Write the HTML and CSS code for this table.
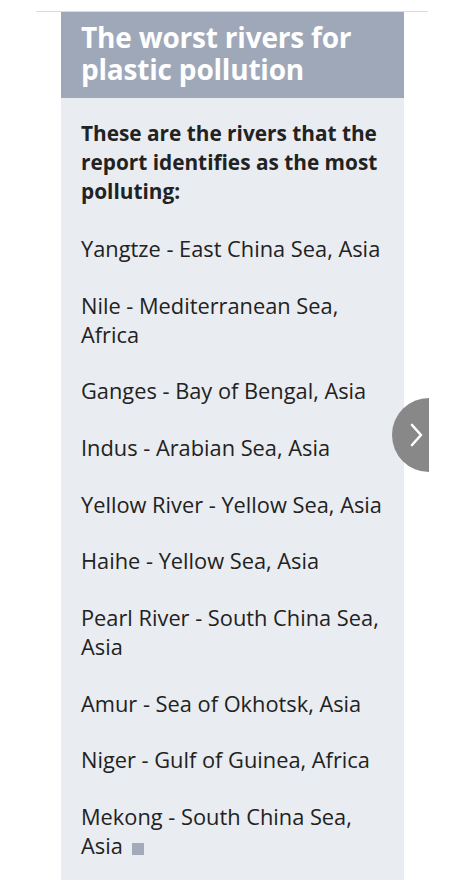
FILE: index.html
```html
<!DOCTYPE html>
<html>
<head>
<meta charset="utf-8">
<link rel="stylesheet" href="styles.css">
</head>
<body>
<div class="page">
  <div class="rule"></div>
  <div class="box">
    <h2 class="head">The worst rivers for plastic pollution</h2>
    <div class="body">
      <p class="intro">These are the rivers that the report identifies as the most polluting:</p>
      <p class="item">Yangtze - East China Sea, Asia</p>
      <p class="item">Nile - Mediterranean Sea, Africa</p>
      <p class="item">Ganges - Bay of Bengal, Asia</p>
      <p class="item">Indus - Arabian Sea, Asia</p>
      <p class="item">Yellow River - Yellow Sea, Asia</p>
      <p class="item">Haihe - Yellow Sea, Asia</p>
      <p class="item">Pearl River - South China Sea, Asia</p>
      <p class="item">Amur - Sea of Okhotsk, Asia</p>
      <p class="item">Niger - Gulf of Guinea, Africa</p>
      <p class="item">Mekong - South China Sea, Asia <span class="end"></span></p>
    </div>
  </div>
  <div class="next">
    <svg width="14" height="24" viewBox="0 0 14 24"><path d="M2 2 L11 12 L2 22" fill="none" stroke="#fff" stroke-width="2.6" stroke-linecap="round" stroke-linejoin="round"/></svg>
  </div>
</div>
</body>
</html>
```
FILE: styles.css
```css
html, body {
  margin: 0;
  padding: 0;
  background: #fff;
}
body {
  font-family: "Open Sans", "Noto Sans", sans-serif;
  color: #222;
}
.page {
  position: relative;
  width: 463px;
  height: 894px;
  overflow: hidden;
}
.rule {
  margin: 11px 0 0 36px;
  width: 392px;
  height: 1px;
  background: #dcdcdc;
}
.box {
  margin-left: 61px;
  width: 343px;
  background: #e9ecf0;
  padding-bottom: 20px;
}
.head {
  margin: 0;
  background: #9ea8b9;
  color: #fff;
  font-size: 28px;
  line-height: 32px;
  font-weight: 700;
  padding: 9px 20px 13px 20px;
  letter-spacing: -0.2px;
}
.body {
  padding: 21px 16px 0 20px;
}
.body p {
  margin: 0 0 27.67px 0;
  font-size: 21.8px;
  line-height: 29px;
}
.body p.intro {
  font-size: 20.8px;
  margin-bottom: 28px;
}
.body p:last-child {
  margin-bottom: 0;
}
.intro {
  font-weight: 700;
}
.end {
  display: inline-block;
  width: 12px;
  height: 12px;
  background: #a3abbb;
  margin-left: 4px;
  vertical-align: -1px;
}
.next {
  position: absolute;
  left: 392px;
  top: 398px;
  width: 37px;
  height: 74px;
  border-radius: 37px 0 0 37px;
  background: #888;
  display: flex;
  align-items: center;
  justify-content: flex-end;
  padding-right: 5px;
  box-sizing: border-box;
}
```
